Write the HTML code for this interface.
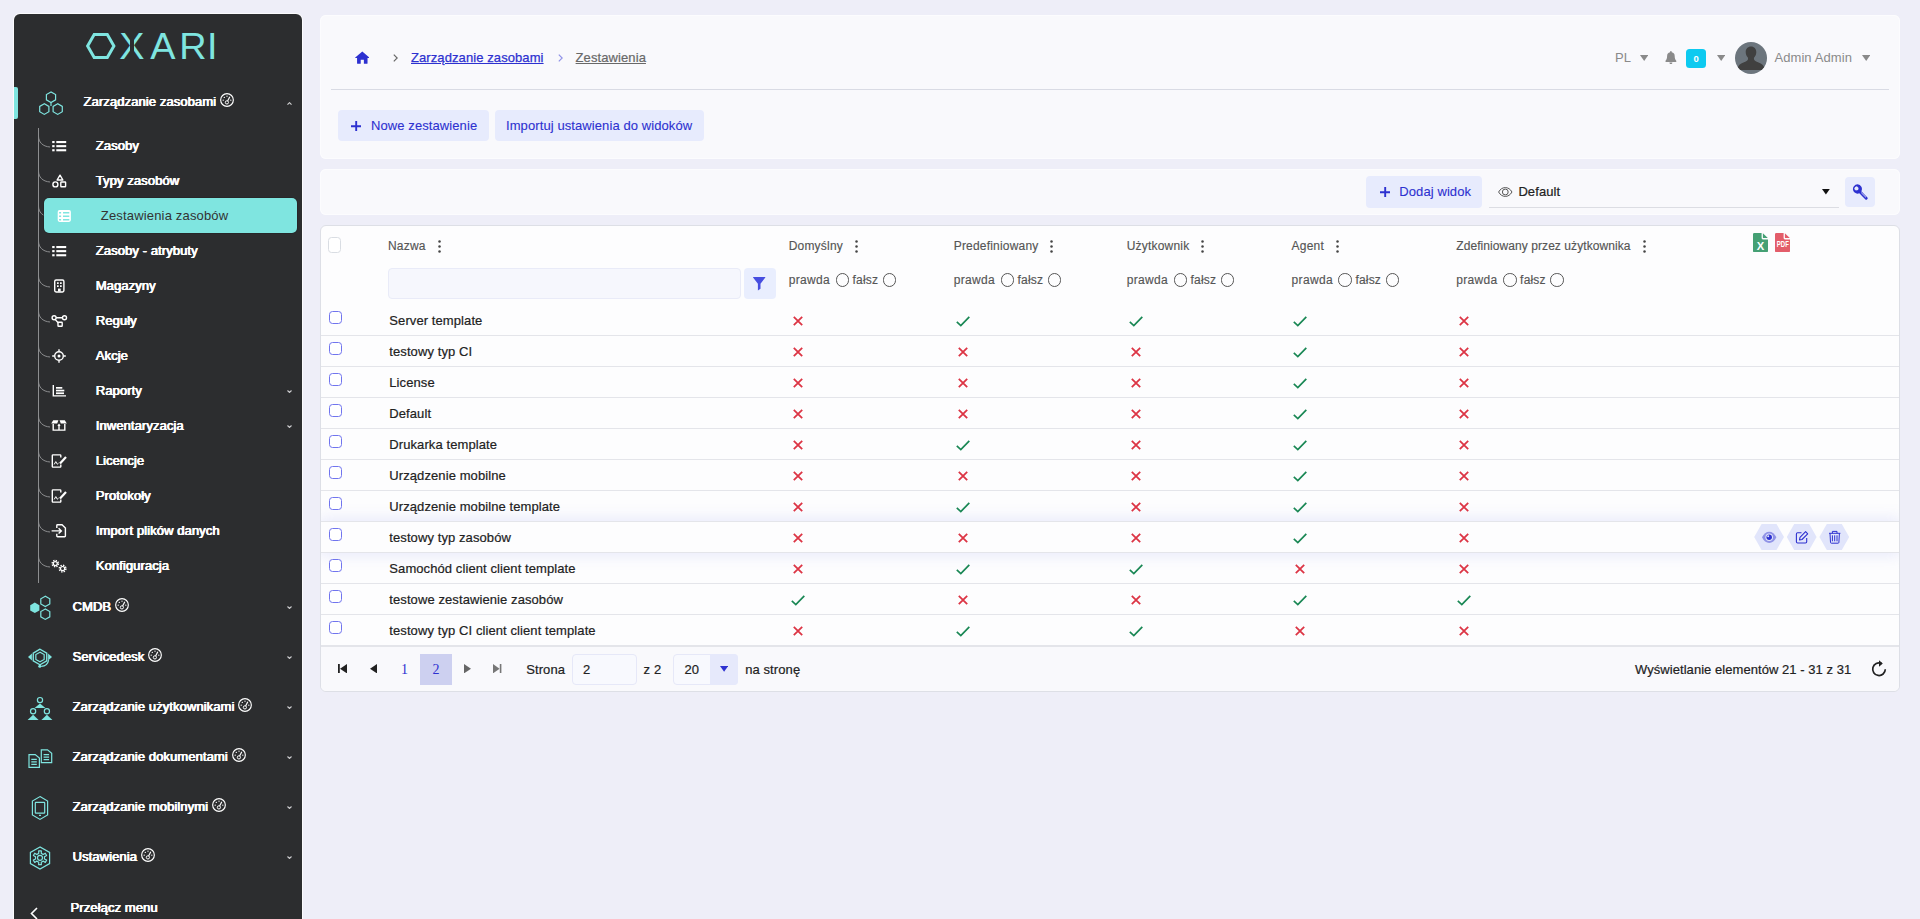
<!DOCTYPE html>
<html lang="pl">
<head>
<meta charset="utf-8">
<title>Zestawienia</title>
<style>
*{box-sizing:border-box;margin:0;padding:0}
html,body{width:1920px;height:919px;overflow:hidden}
body{background:#eeeef8;font-family:"Liberation Sans",sans-serif;font-size:13px;letter-spacing:0.09px;color:#222;-webkit-text-stroke:0.2px;position:relative}
.abs{position:absolute}
.t{position:absolute;white-space:nowrap;line-height:16px}
/* sidebar */
#sb{position:absolute;left:14px;top:14px;width:288px;height:920px;background:#2c2d2f;border-radius:6px 6px 0 0;box-shadow:0 0 0 1px #fbfbfd}
#sb .t{color:#fff;-webkit-text-stroke:0.12px #fff;text-shadow:0.4px 0 0 #fff,-0.4px 0 0 #fff}
#sb{--sbw:400}
.gz{display:inline-block;vertical-align:-1px;margin-left:0}
/* cards */
.card{position:absolute;left:320px;width:1580px;background:#f9f9fc;border-radius:6px;box-shadow:0 0 0 1px #fcfcfe inset}
.btn{position:absolute;background:#e7ebfd;border-radius:4px;color:#2a2dcc}
</style>
</head>
<body>
<div id="sb">
<svg class="abs" style="left:0;top:0" width="288" height="905" viewBox="14 14 288 905" fill="none">
<text x="84 119.35 150.2 179.15 207.1" y="59" font-family="Liberation Sans, sans-serif" font-size="37.8" letter-spacing="0" fill="#7fe5e0" style="-webkit-text-stroke:0">OXARI</text>
<rect x="82" y="28" width="35" height="36" fill="#2c2d2f"/><rect x="130" y="30" width="4" height="32" fill="#2c2d2f"/>
<g stroke="#7fe5e0" stroke-width="3" fill="none"><polygon points="87.6,46 94.2,34.5 107.3,34.5 113.9,46 107.3,57.5 94.2,57.5"/></g>
<path d="M14 87h2a2 2 0 0 1 2 2v28a2 2 0 0 1-2 2h-2z" fill="#7fe5e0"/>
<g stroke="#7fe5e0" stroke-width="1.2"><polygon points="51.00,91.90 46.41,94.55 46.41,99.85 51.00,102.50 55.59,99.85 55.59,94.55"/><polygon points="44.30,103.80 39.71,106.45 39.71,111.75 44.30,114.40 48.89,111.75 48.89,106.45"/><polygon points="57.70,103.80 53.11,106.45 53.11,111.75 57.70,114.40 62.29,111.75 62.29,106.45"/><path d="M51 102.5v3.6"/></g>
<path d="M38.5 128V583" stroke="#8d8e90" stroke-width="1"/>
<path d="M38.5 136c0 6 4 10.5 11.5 11" stroke="#8d8e90" stroke-width="1"/>
<path d="M38.5 171c0 6 4 10.5 11.5 11" stroke="#8d8e90" stroke-width="1"/>
<path d="M38.5 206c0 6 4 10.5 11.5 11" stroke="#8d8e90" stroke-width="1"/>
<path d="M38.5 241c0 6 4 10.5 11.5 11" stroke="#8d8e90" stroke-width="1"/>
<path d="M38.5 276c0 6 4 10.5 11.5 11" stroke="#8d8e90" stroke-width="1"/>
<path d="M38.5 311c0 6 4 10.5 11.5 11" stroke="#8d8e90" stroke-width="1"/>
<path d="M38.5 346c0 6 4 10.5 11.5 11" stroke="#8d8e90" stroke-width="1"/>
<path d="M38.5 381c0 6 4 10.5 11.5 11" stroke="#8d8e90" stroke-width="1"/>
<path d="M38.5 416c0 6 4 10.5 11.5 11" stroke="#8d8e90" stroke-width="1"/>
<path d="M38.5 451c0 6 4 10.5 11.5 11" stroke="#8d8e90" stroke-width="1"/>
<path d="M38.5 486c0 6 4 10.5 11.5 11" stroke="#8d8e90" stroke-width="1"/>
<path d="M38.5 521c0 6 4 10.5 11.5 11" stroke="#8d8e90" stroke-width="1"/>
<path d="M38.5 556c0 6 4 10.5 11.5 11" stroke="#8d8e90" stroke-width="1"/>
<rect x="43.4" y="197.4" width="254.2" height="36.2" rx="5.6" fill="#222325"/><rect x="44" y="198" width="253" height="35" rx="5" fill="#7fe5e0"/>
<g fill="#fff"><rect x="52.2" y="141.0" width="2.4" height="2.1"/><rect x="56.3" y="141.0" width="9.9" height="2.1"/><rect x="52.2" y="145.1" width="2.4" height="2.1"/><rect x="56.3" y="145.1" width="9.9" height="2.1"/><rect x="52.2" y="149.2" width="2.4" height="2.1"/><rect x="56.3" y="149.2" width="9.9" height="2.1"/></g>
<g stroke="#fff" fill="none" stroke-width="1.4"><path d="M60 175.2L62.9 180H57.1Z" stroke-linejoin="round"/><circle cx="55.4" cy="184.4" r="2.5"/><rect x="60.8" y="182" width="4.8" height="4.8" rx=".5"/></g>
<rect x="57.7" y="210.1" width="13.2" height="11.8" rx="1.8" fill="#fff"/><g fill="#7fe5e0"><rect x="59.1" y="212.0" width="2" height="1.5"/><rect x="63" y="212.0" width="6.3" height="1.5"/><rect x="59.1" y="215.5" width="2" height="1.5"/><rect x="63" y="215.5" width="6.3" height="1.5"/><rect x="59.1" y="219.0" width="2" height="1.5"/><rect x="63" y="219.0" width="6.3" height="1.5"/></g>
<g fill="#fff"><rect x="52.2" y="246.0" width="2.4" height="2.1"/><rect x="56.3" y="246.0" width="9.9" height="2.1"/><rect x="52.2" y="250.1" width="2.4" height="2.1"/><rect x="56.3" y="250.1" width="9.9" height="2.1"/><rect x="52.2" y="254.2" width="2.4" height="2.1"/><rect x="56.3" y="254.2" width="9.9" height="2.1"/></g>
<g stroke="#fff" fill="none" stroke-width="1.4"><rect x="54.7" y="280" width="9.2" height="12" rx="1.4"/></g><g fill="#fff"><rect x="57" y="282.3" width="1.7" height="1.7"/><rect x="60" y="282.3" width="1.7" height="1.7"/><rect x="57" y="285.3" width="1.7" height="1.7"/><rect x="60" y="285.3" width="1.7" height="1.7"/><rect x="58" y="288.6" width="2.7" height="3"/></g>
<g stroke="#fff" fill="none" stroke-width="1.4"><circle cx="54.1" cy="317.8" r="2"/><circle cx="64.5" cy="317.8" r="2"/><rect x="58" y="322.3" width="4.2" height="4" rx=".5"/><path d="M56.1 317.8H62.5M55.3 319.6L58.4 323"/></g>
<g stroke="#fff" fill="none" stroke-width="1.4"><circle cx="59" cy="356" r="4.3"/><path d="M59 349.2v2.3M59 360.5v2.3M52.2 356h2.3M63.5 356h2.3"/></g><circle cx="59" cy="356" r="1.5" fill="#fff"/>
<g stroke="#fff" fill="none" stroke-width="1.4"><path d="M53.3 385V395.9H66"/></g><g fill="#fff"><rect x="56" y="387" width="6.3" height="1.7"/><rect x="56" y="389.7" width="8.3" height="1.7"/><rect x="56" y="392.4" width="8" height="1.7"/></g>
<g fill="#fff"><path d="M53.2 420.3H58.4L57.2 423.4H51.2ZM59.6 420.3H64.8L66.8 423.4H60.8Z"/></g><g stroke="#fff" fill="none" stroke-width="1.4"><path d="M53.2 424V430.1H64.8V424M59 424.5V430"/></g><path d="M59 423.4L60.6 426H57.4Z" fill="#fff"/>
<g stroke="#fff" fill="none" stroke-width="1.4"><path d="M60.8 457.6V455.6a.7 .7 0 0 0 -.7 -.7H53a.7 .7 0 0 0 -.7 .7V466.4a.7 .7 0 0 0 .7 .7H60.1a.7 .7 0 0 0 .7 -.7V464.4"/><path d="M66 457.0L60 463.4" stroke-width="2.2"/><path d="M54.2 464.4l1.6 -2.8l1.5 2.6l1.2 -1" stroke-width="1"/></g>
<g stroke="#fff" fill="none" stroke-width="1.4"><path d="M60.8 492.6V490.6a.7 .7 0 0 0 -.7 -.7H53a.7 .7 0 0 0 -.7 .7V501.4a.7 .7 0 0 0 .7 .7H60.1a.7 .7 0 0 0 .7 -.7V499.4"/><path d="M66 492.0L60 498.4" stroke-width="2.2"/><path d="M54.2 499.4l1.6 -2.8l1.5 2.6l1.2 -1" stroke-width="1"/></g>
<g stroke="#fff" fill="none" stroke-width="1.4"><path d="M56.8 528V525.4a.7 .7 0 0 1 .7 -.7H62L65.4 528V536a.7 .7 0 0 1 -.7 .7H57.5a.7 .7 0 0 1 -.7 -.7V533.8"/><path d="M51.6 530.9H61.2M58.6 528.2L61.4 530.9L58.6 533.6"/></g>
<g stroke="#fff" fill="none"><circle cx="55.3" cy="563.6" r="3.1" stroke-width="1.5" stroke-dasharray="1.3 1.13"/><circle cx="55.3" cy="563.6" r="2" stroke-width="1.2"/><circle cx="62.6" cy="568.6" r="3.3" stroke-width="1.5" stroke-dasharray="1.4 1.19"/><circle cx="62.6" cy="568.6" r="2.1" stroke-width="1.2"/></g>
<polygon points="34.80,602.50 30.21,605.15 30.21,610.45 34.80,613.10 39.39,610.45 39.39,605.15" fill="#7fe5e0"/><g stroke="#7fe5e0" fill="none" stroke-width="1.2"><polygon points="45.30,596.20 40.80,598.80 40.80,604.00 45.30,606.60 49.80,604.00 49.80,598.80"/><polygon points="45.30,609.00 40.80,611.60 40.80,616.80 45.30,619.40 49.80,616.80 49.80,611.60"/></g>
<g stroke="#7fe5e0" fill="none" stroke-width="1.2"><polygon points="40.00,649.20 33.25,653.10 33.25,660.90 40.00,664.80 46.75,660.90 46.75,653.10" stroke-width="1.4"/><polygon points="40.00,652.20 35.84,654.60 35.84,659.40 40.00,661.80 44.16,659.40 44.16,654.60"/><path d="M48.6 660.2Q47.6 666.2 41.2 666.3"/></g><g fill="#7fe5e0"><path d="M28 657L31.9 653.6V660.4Z"/><path d="M52 657L48.1 653.6V660.4Z"/><circle cx="39.8" cy="666.2" r="1.5"/></g>
<g stroke="#7fe5e0" fill="none" stroke-width="1.2"><circle cx="40" cy="700.1" r="2.6"/><circle cx="33.1" cy="711.2" r="2.6"/><circle cx="46.9" cy="711.2" r="2.6"/></g><g fill="#7fe5e0"><path d="M40 703.6L45.4 708H34.600Z"/><path d="M33.1 714.800L38.6 720H27.600Z"/><path d="M46.9 714.800L52.4 720H41.400Z"/></g>
<g stroke="#7fe5e0" fill="none" stroke-width="1.2"><path d="M29 754.6H35.2L39.4 758V767.4H29Z"/><path d="M31.3 759.4H36.8M31.3 761.9H36.8M31.3 764.4H36.8"/><path d="M41.3 749.8H47.5L51.7 753.2V762.6H41.3Z"/><path d="M43.6 754.6H49.1M43.6 757.1H49.1M43.6 759.6H49.1"/></g>
<g stroke="#7fe5e0" fill="none" stroke-width="1.2"><path d="M40 796.6L47.6 801V815L40 819.4L32.4 815V801Z"/><rect x="35.3" y="802.4" width="9.4" height="10.8" rx=".6"/><path d="M39 815.3H41"/></g>
<g stroke="#7fe5e0" fill="none" stroke-width="1.2"><polygon points="40.00,846.90 30.39,852.45 30.39,863.55 40.00,869.10 49.61,863.55 49.61,852.45"/><polygon points="38.73,853.38 38.66,850.93 41.34,850.93 41.27,853.38 43.20,854.49 45.28,853.21 46.62,855.52 44.46,856.69 44.46,858.91 46.62,860.08 45.28,862.39 43.20,861.11 41.27,862.22 41.34,864.67 38.66,864.67 38.73,862.22 36.80,861.11 34.72,862.39 33.38,860.08 35.54,858.91 35.54,856.69 33.38,855.52 34.72,853.21 36.80,854.49" stroke-linejoin="round"/><circle cx="40" cy="857.8" r="2.5"/></g>
</svg>
<div class="t" style="left:69.6px;top:79px;font-weight:var(--sbw)">Zarządzanie zasobami <svg class="gz" width="14" height="14" viewBox="0 0 14 14" fill="none" stroke="#fff"><circle cx="7" cy="7" r="6.35" stroke-width="1.15"/><circle cx="6.9" cy="9.4" r="1.6" stroke-width="1"/><path d="M7.6 8L9.8 3.8" stroke-width="1.2"/><path d="M3.2 7.2h.01M4.3 4.4h.01M7 3.2h.01M10.8 7.2h.01" stroke-width="1.3" stroke-linecap="round"/></svg></div>
<div class="t" style="left:81.8px;top:124px;">Zasoby</div>
<div class="t" style="left:81.8px;top:159px;">Typy zasobów</div>
<div class="t" style="left:86.8px;top:194px;color:#333;-webkit-text-stroke:0;text-shadow:none;letter-spacing:0.17px">Zestawienia zasobów</div>
<div class="t" style="left:81.8px;top:229px;">Zasoby - atrybuty</div>
<div class="t" style="left:81.8px;top:264px;">Magazyny</div>
<div class="t" style="left:81.8px;top:299px;">Reguły</div>
<div class="t" style="left:81.8px;top:334px;">Akcje</div>
<div class="t" style="left:81.8px;top:369px;">Raporty</div>
<div class="t" style="left:81.8px;top:404px;">Inwentaryzacja</div>
<div class="t" style="left:81.8px;top:439px;">Licencje</div>
<div class="t" style="left:81.8px;top:474px;">Protokoły</div>
<div class="t" style="left:81.8px;top:509px;">Import plików danych</div>
<div class="t" style="left:81.8px;top:544px;">Konfiguracja</div>
<div class="t" style="left:58.6px;top:584px;">CMDB <svg class="gz" width="14" height="14" viewBox="0 0 14 14" fill="none" stroke="#fff"><circle cx="7" cy="7" r="6.35" stroke-width="1.15"/><circle cx="6.9" cy="9.4" r="1.6" stroke-width="1"/><path d="M7.6 8L9.8 3.8" stroke-width="1.2"/><path d="M3.2 7.2h.01M4.3 4.4h.01M7 3.2h.01M10.8 7.2h.01" stroke-width="1.3" stroke-linecap="round"/></svg></div>
<div class="t" style="left:58.6px;top:634px;">Servicedesk <svg class="gz" width="14" height="14" viewBox="0 0 14 14" fill="none" stroke="#fff"><circle cx="7" cy="7" r="6.35" stroke-width="1.15"/><circle cx="6.9" cy="9.4" r="1.6" stroke-width="1"/><path d="M7.6 8L9.8 3.8" stroke-width="1.2"/><path d="M3.2 7.2h.01M4.3 4.4h.01M7 3.2h.01M10.8 7.2h.01" stroke-width="1.3" stroke-linecap="round"/></svg></div>
<div class="t" style="left:58.6px;top:684px;">Zarządzanie użytkownikami <svg class="gz" width="14" height="14" viewBox="0 0 14 14" fill="none" stroke="#fff"><circle cx="7" cy="7" r="6.35" stroke-width="1.15"/><circle cx="6.9" cy="9.4" r="1.6" stroke-width="1"/><path d="M7.6 8L9.8 3.8" stroke-width="1.2"/><path d="M3.2 7.2h.01M4.3 4.4h.01M7 3.2h.01M10.8 7.2h.01" stroke-width="1.3" stroke-linecap="round"/></svg></div>
<div class="t" style="left:58.6px;top:734px;">Zarządzanie dokumentami <svg class="gz" width="14" height="14" viewBox="0 0 14 14" fill="none" stroke="#fff"><circle cx="7" cy="7" r="6.35" stroke-width="1.15"/><circle cx="6.9" cy="9.4" r="1.6" stroke-width="1"/><path d="M7.6 8L9.8 3.8" stroke-width="1.2"/><path d="M3.2 7.2h.01M4.3 4.4h.01M7 3.2h.01M10.8 7.2h.01" stroke-width="1.3" stroke-linecap="round"/></svg></div>
<div class="t" style="left:58.6px;top:784px;">Zarządzanie mobilnymi <svg class="gz" width="14" height="14" viewBox="0 0 14 14" fill="none" stroke="#fff"><circle cx="7" cy="7" r="6.35" stroke-width="1.15"/><circle cx="6.9" cy="9.4" r="1.6" stroke-width="1"/><path d="M7.6 8L9.8 3.8" stroke-width="1.2"/><path d="M3.2 7.2h.01M4.3 4.4h.01M7 3.2h.01M10.8 7.2h.01" stroke-width="1.3" stroke-linecap="round"/></svg></div>
<div class="t" style="left:58.6px;top:834px;">Ustawienia <svg class="gz" width="14" height="14" viewBox="0 0 14 14" fill="none" stroke="#fff"><circle cx="7" cy="7" r="6.35" stroke-width="1.15"/><circle cx="6.9" cy="9.4" r="1.6" stroke-width="1"/><path d="M7.6 8L9.8 3.8" stroke-width="1.2"/><path d="M3.2 7.2h.01M4.3 4.4h.01M7 3.2h.01M10.8 7.2h.01" stroke-width="1.3" stroke-linecap="round"/></svg></div>
<div class="t" style="left:56.6px;top:885.7px;">Przełącz menu</div>
<svg class="abs" style="left:272.7px;top:88.0px" width="5" height="3" viewBox="0 0 4.6 3" fill="none" stroke="#d0d0d2" stroke-width="1.15"><path d="M.3 2.6L2.3 0.7L4.3 2.6"/></svg>
<svg class="abs" style="left:272.7px;top:375.5px" width="5" height="3" viewBox="0 0 4.6 3" fill="none" stroke="#d0d0d2" stroke-width="1.15"><path d="M.3 0.5L2.3 2.4L4.3 0.5"/></svg>
<svg class="abs" style="left:272.7px;top:410.5px" width="5" height="3" viewBox="0 0 4.6 3" fill="none" stroke="#d0d0d2" stroke-width="1.15"><path d="M.3 0.5L2.3 2.4L4.3 0.5"/></svg>
<svg class="abs" style="left:272.7px;top:592.0px" width="5" height="3" viewBox="0 0 4.6 3" fill="none" stroke="#d0d0d2" stroke-width="1.15"><path d="M.3 0.5L2.3 2.4L4.3 0.5"/></svg>
<svg class="abs" style="left:272.7px;top:642.0px" width="5" height="3" viewBox="0 0 4.6 3" fill="none" stroke="#d0d0d2" stroke-width="1.15"><path d="M.3 0.5L2.3 2.4L4.3 0.5"/></svg>
<svg class="abs" style="left:272.7px;top:692.0px" width="5" height="3" viewBox="0 0 4.6 3" fill="none" stroke="#d0d0d2" stroke-width="1.15"><path d="M.3 0.5L2.3 2.4L4.3 0.5"/></svg>
<svg class="abs" style="left:272.7px;top:742.0px" width="5" height="3" viewBox="0 0 4.6 3" fill="none" stroke="#d0d0d2" stroke-width="1.15"><path d="M.3 0.5L2.3 2.4L4.3 0.5"/></svg>
<svg class="abs" style="left:272.7px;top:792.0px" width="5" height="3" viewBox="0 0 4.6 3" fill="none" stroke="#d0d0d2" stroke-width="1.15"><path d="M.3 0.5L2.3 2.4L4.3 0.5"/></svg>
<svg class="abs" style="left:272.7px;top:842.0px" width="5" height="3" viewBox="0 0 4.6 3" fill="none" stroke="#d0d0d2" stroke-width="1.15"><path d="M.3 0.5L2.3 2.4L4.3 0.5"/></svg>
<svg class="abs" style="left:16px;top:893px" width="8" height="12" viewBox="0 0 8 12" fill="none" stroke="#fff" stroke-width="1.6"><path d="M7 1L1.5 6.5L7 12"/></svg>
</div>
<div class="card" id="c1" style="top:15px;height:144px">
<svg class="abs" style="left:34.60000000000002px;top:36px" width="14.6" height="12.8" viewBox="0 0 24 21" fill="#2d31d0"><path d="M12 0.6L0.4 10.6a.5 .5 0 0 0 .3 .9H3.4V20a1 1 0 0 0 1 1H9.4V14.4H14.6V21H19.6a1 1 0 0 0 1-1V11.5H23.3a.5 .5 0 0 0 .3-.9Z"/></svg>
<svg class="abs" style="left:72.60000000000002px;top:39px" width="5" height="8" viewBox="0 0 5 8" fill="none" stroke="#666" stroke-width="1.2"><path d="M.8 .6L4.2 4L.8 7.4"/></svg>
<div class="t" style="left:91px;top:34.5px;color:#2d31d0;text-decoration:underline;-webkit-text-stroke:0.25px #2d31d0">Zarządzanie zasobami</div>
<svg class="abs" style="left:238px;top:39px" width="5" height="8" viewBox="0 0 5 8" fill="none" stroke="#8f92e8" stroke-width="1.2"><path d="M.8 .6L4.2 4L.8 7.4"/></svg>
<div class="t" style="left:255.60000000000002px;top:34.5px;color:#686868;text-decoration:underline">Zestawienia</div>
<div class="t" style="left:1295px;top:34.5px;color:#8a8a8a;-webkit-text-stroke:0">PL</div>
<svg class="abs" style="left:1319.8px;top:40.3px" width="8.4" height="6" viewBox="0 0 8.4 6" fill="#8a8a8a"><path d="M0 0H8.4L4.2 6Z"/></svg>
<svg class="abs" style="left:1345.2px;top:35.5px" width="11.8" height="13.2" viewBox="0 0 14 16" fill="#8a8a8a"><path d="M7 0a1 1 0 0 0-1 1v.6A4.6 4.6 0 0 0 2.4 6.100c0 3.500-.9 4.700-1.900 5.700a.9 .9 0 0 0 .65 1.500H12.850a.9 .9 0 0 0 .65-1.500c-1-1-1.900-2.200-1.900-5.700A4.600 4.600 0 0 0 8 1.600V1a1 1 0 0 0-1-1ZM5.200 14.100a1.800 1.800 0 0 0 3.600 0Z"/></svg>
<div class="abs" style="left:1366.2px;top:34px;width:19.8px;height:19px;background:#0dcaf0;border-radius:3.5px"></div>
<div class="t" style="left:1366.2px;top:35.6px;width:19.8px;text-align:center;color:#fff;font-weight:bold;font-size:9.5px;letter-spacing:0;-webkit-text-stroke:0">0</div>
<svg class="abs" style="left:1396.8px;top:40.3px" width="8.4" height="6" viewBox="0 0 8.4 6" fill="#8a8a8a"><path d="M0 0H8.4L4.2 6Z"/></svg>
<svg class="abs" style="left:1415px;top:27px" width="32" height="32" viewBox="0 0 32 32"><defs><clipPath id="av"><circle cx="16" cy="16" r="16"/></clipPath></defs><circle cx="16" cy="16" r="16" fill="#6c757d"/><g clip-path="url(#av)" fill="#404040"><path d="M16 4.500c-3.200 0-5.300 2.300-5.300 5.600 0 2.200 .9 4.400 2.300 5.700 .3 1.700-.4 2.900-2.200 3.600C7.600 20.600 4.400 21.800 3.200 24.500L2.500 28H29.500L28.800 24.500C27.600 21.800 24.400 20.600 21.200 19.400 19.400 18.700 18.700 17.500 19 15.800 20.400 14.500 21.300 12.300 21.300 10.100 21.300 6.800 19.200 4.500 16 4.500Z"/></g></svg>
<div class="t" style="left:1454.4px;top:34.5px;color:#8a8a8a;-webkit-text-stroke:0">Admin Admin</div>
<svg class="abs" style="left:1542px;top:40.3px" width="8.4" height="6" viewBox="0 0 8.4 6" fill="#8a8a8a"><path d="M0 0H8.4L4.2 6Z"/></svg>
<div class="abs" style="left:11px;top:74px;width:1558px;height:1px;background:#d9dbe4"></div>
<div class="btn" style="left:18px;top:95px;width:151px;height:31px"></div>
<svg class="abs" style="left:30.80000000000001px;top:106.0px" width="10.4" height="10.4" viewBox="0 0 10.4 10.4" stroke="#2d31d0" stroke-width="1.9"><path d="M5.200 0V10.400M0 5.200H10.400"/></svg>
<div class="t" style="left:51px;top:102.8px;color:#2d31d0;-webkit-text-stroke:0.1px #2d31d0">Nowe zestawienie</div>
<div class="btn" style="left:175px;top:95px;width:209px;height:31px"></div>
<div class="t" style="left:186px;top:102.8px;color:#2d31d0;-webkit-text-stroke:0.1px #2d31d0">Importuj ustawienia do widoków</div>
</div>
<div class="card" id="c2" style="top:169px;height:46px">
<div class="btn" style="left:1046px;top:7px;width:116px;height:32px"></div>
<svg class="abs" style="left:1059.7px;top:17.600000000000012px" width="10.4" height="10.4" viewBox="0 0 10.4 10.4" stroke="#2d31d0" stroke-width="1.9"><path d="M5.200 0V10.400M0 5.200H10.400"/></svg>
<div class="t" style="left:1079.3px;top:14.800000000000011px;color:#2d31d0;-webkit-text-stroke:0.1px #2d31d0">Dodaj widok</div>
<svg class="abs" style="left:1178.2px;top:18px" width="14.6" height="10" viewBox="0 0 14.6 10" fill="none" stroke="#555" stroke-width="1"><path d="M.6 5C2.300 2 4.600 .6 7.300 .6S12.300 2 14 5C12.300 8 10 9.400 7.300 9.400S2.300 8 .6 5Z"/><circle cx="7.300" cy="5" r="2.900"/></svg>
<div class="t" style="left:1198.4px;top:14.800000000000011px;color:#222">Default</div>
<svg class="abs" style="left:1502.2px;top:20px" width="7.8" height="5.6" viewBox="0 0 7.8 5.6" fill="#111"><path d="M0 0H7.8L3.9 5.6Z"/></svg>
<div class="abs" style="left:1169px;top:38px;width:350px;height:1px;background:#dcdde3"></div>
<div class="btn" style="left:1525px;top:8px;width:29.5px;height:30px"></div>
<svg class="abs" style="left:1532px;top:15px" width="16" height="16" viewBox="0 0 16 16" fill="#2d31d0"><path d="M5.600 0.300A4.700 4.700 0 0 0 1.100 6.200 4.700 4.700 0 0 0 7.300 9.300L13.200 15.200a1.400 1.400 0 0 0 2-2L9.300 7.300A4.700 4.700 0 0 0 5.600 0.300ZM4.900 2.200 6.600 3.900 6.100 6.100 3.900 6.600 2.200 4.900A3.200 3.200 0 0 1 4.900 2.200Z" fill-rule="evenodd"/><path d="M9.200 8.600L14 13.400" stroke="#e6e9fb" stroke-width=".9"/></svg>
</div>
<div id="grid" class="abs" style="left:320px;top:225px;width:1580px;height:467px;background:#fdfdfe;border:1px solid #dddfe6;border-radius:6px;overflow:hidden">
<div class="abs" style="left:0.0px;top:296.0px;width:1578px;height:30px;box-shadow:0 0 16px 3px rgba(120,130,230,0.17);background:#fdfdfe"></div>
<div class="abs" style="left:0.0px;top:109.0px;width:1578px;height:1px;background:#e4e5ea"></div>
<div class="abs" style="left:0.0px;top:140.0px;width:1578px;height:1px;background:#e4e5ea"></div>
<div class="abs" style="left:0.0px;top:171.0px;width:1578px;height:1px;background:#e4e5ea"></div>
<div class="abs" style="left:0.0px;top:202.0px;width:1578px;height:1px;background:#e4e5ea"></div>
<div class="abs" style="left:0.0px;top:233.0px;width:1578px;height:1px;background:#e4e5ea"></div>
<div class="abs" style="left:0.0px;top:264.0px;width:1578px;height:1px;background:#e4e5ea"></div>
<div class="abs" style="left:0.0px;top:295.0px;width:1578px;height:1px;background:#e4e5ea"></div>
<div class="abs" style="left:0.0px;top:326.0px;width:1578px;height:1px;background:#e4e5ea"></div>
<div class="abs" style="left:0.0px;top:357.0px;width:1578px;height:1px;background:#e4e5ea"></div>
<div class="abs" style="left:0.0px;top:388.0px;width:1578px;height:1px;background:#e4e5ea"></div>
<div class="abs" style="left:0.0px;top:419.0px;width:1578px;height:1px;background:#e4e5ea"></div>
<div class="abs" style="left:7.0px;top:11.0px;width:13px;height:16px;border:1px solid #d9dde3;border-radius:3.5px;background:#fff"></div>
<div class="t" style="left:67.0px;top:11.8px;color:#555;font-size:12px;letter-spacing:0.2px;-webkit-text-stroke:0.15px #555">Nazwa</div>
<svg class="abs" style="left:117.0px;top:13.5px" width="3" height="13" viewBox="0 0 3 13" fill="#444"><circle cx="1.5" cy="1.4" r="1.25"/><circle cx="1.5" cy="6.5" r="1.25"/><circle cx="1.5" cy="11.6" r="1.25"/></svg>
<div class="t" style="left:467.7px;top:11.8px;color:#555;font-size:12px;letter-spacing:0.2px;-webkit-text-stroke:0.15px #555">Domyślny</div>
<svg class="abs" style="left:533.8px;top:13.5px" width="3" height="13" viewBox="0 0 3 13" fill="#444"><circle cx="1.5" cy="1.4" r="1.25"/><circle cx="1.5" cy="6.5" r="1.25"/><circle cx="1.5" cy="11.6" r="1.25"/></svg>
<div class="t" style="left:632.7px;top:11.8px;color:#555;font-size:12px;letter-spacing:0.2px;-webkit-text-stroke:0.15px #555">Predefiniowany</div>
<svg class="abs" style="left:728.8px;top:13.5px" width="3" height="13" viewBox="0 0 3 13" fill="#444"><circle cx="1.5" cy="1.4" r="1.25"/><circle cx="1.5" cy="6.5" r="1.25"/><circle cx="1.5" cy="11.6" r="1.25"/></svg>
<div class="t" style="left:805.7px;top:11.8px;color:#555;font-size:12px;letter-spacing:0.2px;-webkit-text-stroke:0.15px #555">Użytkownik</div>
<svg class="abs" style="left:880.0px;top:13.5px" width="3" height="13" viewBox="0 0 3 13" fill="#444"><circle cx="1.5" cy="1.4" r="1.25"/><circle cx="1.5" cy="6.5" r="1.25"/><circle cx="1.5" cy="11.6" r="1.25"/></svg>
<div class="t" style="left:970.6px;top:11.8px;color:#555;font-size:12px;letter-spacing:0.2px;-webkit-text-stroke:0.15px #555">Agent</div>
<svg class="abs" style="left:1015.0px;top:13.5px" width="3" height="13" viewBox="0 0 3 13" fill="#444"><circle cx="1.5" cy="1.4" r="1.25"/><circle cx="1.5" cy="6.5" r="1.25"/><circle cx="1.5" cy="11.6" r="1.25"/></svg>
<div class="t" style="left:1135.3px;top:11.8px;color:#555;font-size:12px;letter-spacing:0.2px;-webkit-text-stroke:0.15px #555;letter-spacing:0.07px">Zdefiniowany przez użytkownika</div>
<svg class="abs" style="left:1321.9px;top:13.5px" width="3" height="13" viewBox="0 0 3 13" fill="#444"><circle cx="1.5" cy="1.4" r="1.25"/><circle cx="1.5" cy="6.5" r="1.25"/><circle cx="1.5" cy="11.6" r="1.25"/></svg>
<div class="abs" style="left:67.0px;top:42.0px;width:353px;height:30.6px;background:#f6f7fd;border:1px solid #e9ebf8;border-radius:4px"></div>
<div class="abs" style="left:423.3px;top:42.0px;width:31.5px;height:30.6px;background:#e9eefe;border-radius:4px"></div>
<svg class="abs" style="left:432.2px;top:51px" width="12.4" height="13.6" viewBox="0 0 12.4 13" preserveAspectRatio="none" fill="#474ee0"><path d="M.3 0H12.100a.3 .3 0 0 1 .23 .5L7.500 6.400V11.300L4.900 13V6.400L.07 .5A.3 .3 0 0 1 .3 0Z"/></svg>
<div class="t" style="left:467.7px;top:45.8px;color:#555;font-size:12px;letter-spacing:0.2px;-webkit-text-stroke:0.15px #555;letter-spacing:0.32px">prawda</div>
<div class="abs" style="left:514.5px;top:47.2px;width:13.5px;height:13.5px;border:1px solid #555;border-radius:50%"></div>
<div class="t" style="left:531.5px;top:45.8px;color:#555;font-size:12px;letter-spacing:0.2px;-webkit-text-stroke:0.15px #555">fałsz</div>
<div class="abs" style="left:561.7px;top:47.2px;width:13.5px;height:13.5px;border:1px solid #555;border-radius:50%"></div>
<div class="t" style="left:632.7px;top:45.8px;color:#555;font-size:12px;letter-spacing:0.2px;-webkit-text-stroke:0.15px #555;letter-spacing:0.32px">prawda</div>
<div class="abs" style="left:679.5px;top:47.2px;width:13.5px;height:13.5px;border:1px solid #555;border-radius:50%"></div>
<div class="t" style="left:696.5px;top:45.8px;color:#555;font-size:12px;letter-spacing:0.2px;-webkit-text-stroke:0.15px #555">fałsz</div>
<div class="abs" style="left:726.7px;top:47.2px;width:13.5px;height:13.5px;border:1px solid #555;border-radius:50%"></div>
<div class="t" style="left:805.7px;top:45.8px;color:#555;font-size:12px;letter-spacing:0.2px;-webkit-text-stroke:0.15px #555;letter-spacing:0.32px">prawda</div>
<div class="abs" style="left:852.5px;top:47.2px;width:13.5px;height:13.5px;border:1px solid #555;border-radius:50%"></div>
<div class="t" style="left:869.5px;top:45.8px;color:#555;font-size:12px;letter-spacing:0.2px;-webkit-text-stroke:0.15px #555">fałsz</div>
<div class="abs" style="left:899.7px;top:47.2px;width:13.5px;height:13.5px;border:1px solid #555;border-radius:50%"></div>
<div class="t" style="left:970.6px;top:45.8px;color:#555;font-size:12px;letter-spacing:0.2px;-webkit-text-stroke:0.15px #555;letter-spacing:0.32px">prawda</div>
<div class="abs" style="left:1017.4px;top:47.2px;width:13.5px;height:13.5px;border:1px solid #555;border-radius:50%"></div>
<div class="t" style="left:1034.4px;top:45.8px;color:#555;font-size:12px;letter-spacing:0.2px;-webkit-text-stroke:0.15px #555">fałsz</div>
<div class="abs" style="left:1064.6px;top:47.2px;width:13.5px;height:13.5px;border:1px solid #555;border-radius:50%"></div>
<div class="t" style="left:1135.3px;top:45.8px;color:#555;font-size:12px;letter-spacing:0.2px;-webkit-text-stroke:0.15px #555;letter-spacing:0.32px">prawda</div>
<div class="abs" style="left:1182.1px;top:47.2px;width:13.5px;height:13.5px;border:1px solid #555;border-radius:50%"></div>
<div class="t" style="left:1199.1px;top:45.8px;color:#555;font-size:12px;letter-spacing:0.2px;-webkit-text-stroke:0.15px #555">fałsz</div>
<div class="abs" style="left:1229.3px;top:47.2px;width:13.5px;height:13.5px;border:1px solid #555;border-radius:50%"></div>
<svg class="abs" style="left:1432.0px;top:7.1px" width="15" height="19.3" viewBox="0 0 15 19.3"><path d="M1.300 0H8.600V5a1.400 1.400 0 0 0 1.400 1.400H15V18a1.300 1.300 0 0 1-1.300 1.300H1.300A1.300 1.300 0 0 1 0 18V1.300A1.300 1.300 0 0 1 1.300 0Z" fill="#45a074"/><path d="M9.900 0.200L14.800 5.100H10.600a.7 .7 0 0 1-.7-.7Z" fill="#45a074"/><text x="7.400" y="16.800" text-anchor="middle" font-size="11.200" font-family="Liberation Sans, sans-serif" font-weight="bold" fill="#fff" style="-webkit-text-stroke:0.6px #fff;letter-spacing:0">X</text></svg>
<svg class="abs" style="left:1454.0px;top:7.1px" width="15" height="19.3" viewBox="0 0 15 19.3"><path d="M1.300 0H8.600V5a1.400 1.400 0 0 0 1.400 1.400H15V18a1.300 1.300 0 0 1-1.300 1.300H1.300A1.300 1.300 0 0 1 0 18V1.300A1.300 1.300 0 0 1 1.300 0Z" fill="#e35d6a"/><path d="M9.900 0.200L14.800 5.100H10.600a.7 .7 0 0 1-.7-.7Z" fill="#e35d6a"/><text x="1.800" y="13.900" font-size="8.300" textLength="12" lengthAdjust="spacingAndGlyphs" font-family="Liberation Sans, sans-serif" font-weight="bold" fill="#fff" style="-webkit-text-stroke:0;letter-spacing:0">PDF</text></svg>
<div class="abs" style="left:8.2px;top:85.0px;width:13px;height:13px;border:1.4px solid #7074ee;border-radius:3.5px;background:#fff"></div>
<div class="t" style="left:68.3px;top:86.5px;color:#222">Server template</div>
<svg class="abs" style="left:472.1px;top:90.3px" width="10" height="10" viewBox="0 0 10 10" fill="none" stroke="#dc3545" stroke-width="1.8"><path d="M.8 .8L9.200 9.200M9.200 .8L.8 9.200"/></svg>
<svg class="abs" style="left:635.1px;top:89.7px" width="14" height="11" viewBox="0 0 14 11" fill="none" stroke="#198754" stroke-width="1.7"><path d="M.8 5.900L4.800 9.600L13.300 .8"/></svg>
<svg class="abs" style="left:807.8px;top:89.7px" width="14" height="11" viewBox="0 0 14 11" fill="none" stroke="#198754" stroke-width="1.7"><path d="M.8 5.900L4.800 9.600L13.300 .8"/></svg>
<svg class="abs" style="left:972.2px;top:89.7px" width="14" height="11" viewBox="0 0 14 11" fill="none" stroke="#198754" stroke-width="1.7"><path d="M.8 5.900L4.800 9.600L13.300 .8"/></svg>
<svg class="abs" style="left:1138.4px;top:90.3px" width="10" height="10" viewBox="0 0 10 10" fill="none" stroke="#dc3545" stroke-width="1.8"><path d="M.8 .8L9.200 9.200M9.200 .8L.8 9.200"/></svg>
<div class="abs" style="left:8.2px;top:116.0px;width:13px;height:13px;border:1.4px solid #7074ee;border-radius:3.5px;background:#fff"></div>
<div class="t" style="left:68.3px;top:117.5px;color:#222">testowy typ CI</div>
<svg class="abs" style="left:472.1px;top:121.3px" width="10" height="10" viewBox="0 0 10 10" fill="none" stroke="#dc3545" stroke-width="1.8"><path d="M.8 .8L9.200 9.200M9.200 .8L.8 9.200"/></svg>
<svg class="abs" style="left:637.1px;top:121.3px" width="10" height="10" viewBox="0 0 10 10" fill="none" stroke="#dc3545" stroke-width="1.8"><path d="M.8 .8L9.200 9.200M9.200 .8L.8 9.200"/></svg>
<svg class="abs" style="left:809.8px;top:121.3px" width="10" height="10" viewBox="0 0 10 10" fill="none" stroke="#dc3545" stroke-width="1.8"><path d="M.8 .8L9.200 9.200M9.200 .8L.8 9.200"/></svg>
<svg class="abs" style="left:972.2px;top:120.7px" width="14" height="11" viewBox="0 0 14 11" fill="none" stroke="#198754" stroke-width="1.7"><path d="M.8 5.900L4.800 9.600L13.300 .8"/></svg>
<svg class="abs" style="left:1138.4px;top:121.3px" width="10" height="10" viewBox="0 0 10 10" fill="none" stroke="#dc3545" stroke-width="1.8"><path d="M.8 .8L9.200 9.200M9.200 .8L.8 9.200"/></svg>
<div class="abs" style="left:8.2px;top:147.0px;width:13px;height:13px;border:1.4px solid #7074ee;border-radius:3.5px;background:#fff"></div>
<div class="t" style="left:68.3px;top:148.5px;color:#222">License</div>
<svg class="abs" style="left:472.1px;top:152.3px" width="10" height="10" viewBox="0 0 10 10" fill="none" stroke="#dc3545" stroke-width="1.8"><path d="M.8 .8L9.200 9.200M9.200 .8L.8 9.200"/></svg>
<svg class="abs" style="left:637.1px;top:152.3px" width="10" height="10" viewBox="0 0 10 10" fill="none" stroke="#dc3545" stroke-width="1.8"><path d="M.8 .8L9.200 9.200M9.200 .8L.8 9.200"/></svg>
<svg class="abs" style="left:809.8px;top:152.3px" width="10" height="10" viewBox="0 0 10 10" fill="none" stroke="#dc3545" stroke-width="1.8"><path d="M.8 .8L9.200 9.200M9.200 .8L.8 9.200"/></svg>
<svg class="abs" style="left:972.2px;top:151.7px" width="14" height="11" viewBox="0 0 14 11" fill="none" stroke="#198754" stroke-width="1.7"><path d="M.8 5.900L4.800 9.600L13.300 .8"/></svg>
<svg class="abs" style="left:1138.4px;top:152.3px" width="10" height="10" viewBox="0 0 10 10" fill="none" stroke="#dc3545" stroke-width="1.8"><path d="M.8 .8L9.200 9.200M9.200 .8L.8 9.200"/></svg>
<div class="abs" style="left:8.2px;top:178.0px;width:13px;height:13px;border:1.4px solid #7074ee;border-radius:3.5px;background:#fff"></div>
<div class="t" style="left:68.3px;top:179.5px;color:#222">Default</div>
<svg class="abs" style="left:472.1px;top:183.3px" width="10" height="10" viewBox="0 0 10 10" fill="none" stroke="#dc3545" stroke-width="1.8"><path d="M.8 .8L9.200 9.200M9.200 .8L.8 9.200"/></svg>
<svg class="abs" style="left:637.1px;top:183.3px" width="10" height="10" viewBox="0 0 10 10" fill="none" stroke="#dc3545" stroke-width="1.8"><path d="M.8 .8L9.200 9.200M9.200 .8L.8 9.200"/></svg>
<svg class="abs" style="left:809.8px;top:183.3px" width="10" height="10" viewBox="0 0 10 10" fill="none" stroke="#dc3545" stroke-width="1.8"><path d="M.8 .8L9.200 9.200M9.200 .8L.8 9.200"/></svg>
<svg class="abs" style="left:972.2px;top:182.7px" width="14" height="11" viewBox="0 0 14 11" fill="none" stroke="#198754" stroke-width="1.7"><path d="M.8 5.900L4.800 9.600L13.300 .8"/></svg>
<svg class="abs" style="left:1138.4px;top:183.3px" width="10" height="10" viewBox="0 0 10 10" fill="none" stroke="#dc3545" stroke-width="1.8"><path d="M.8 .8L9.200 9.200M9.200 .8L.8 9.200"/></svg>
<div class="abs" style="left:8.2px;top:209.0px;width:13px;height:13px;border:1.4px solid #7074ee;border-radius:3.5px;background:#fff"></div>
<div class="t" style="left:68.3px;top:210.5px;color:#222">Drukarka template</div>
<svg class="abs" style="left:472.1px;top:214.3px" width="10" height="10" viewBox="0 0 10 10" fill="none" stroke="#dc3545" stroke-width="1.8"><path d="M.8 .8L9.200 9.200M9.200 .8L.8 9.200"/></svg>
<svg class="abs" style="left:635.1px;top:213.7px" width="14" height="11" viewBox="0 0 14 11" fill="none" stroke="#198754" stroke-width="1.7"><path d="M.8 5.900L4.800 9.600L13.300 .8"/></svg>
<svg class="abs" style="left:809.8px;top:214.3px" width="10" height="10" viewBox="0 0 10 10" fill="none" stroke="#dc3545" stroke-width="1.8"><path d="M.8 .8L9.200 9.200M9.200 .8L.8 9.200"/></svg>
<svg class="abs" style="left:972.2px;top:213.7px" width="14" height="11" viewBox="0 0 14 11" fill="none" stroke="#198754" stroke-width="1.7"><path d="M.8 5.900L4.800 9.600L13.300 .8"/></svg>
<svg class="abs" style="left:1138.4px;top:214.3px" width="10" height="10" viewBox="0 0 10 10" fill="none" stroke="#dc3545" stroke-width="1.8"><path d="M.8 .8L9.200 9.200M9.200 .8L.8 9.200"/></svg>
<div class="abs" style="left:8.2px;top:240.0px;width:13px;height:13px;border:1.4px solid #7074ee;border-radius:3.5px;background:#fff"></div>
<div class="t" style="left:68.3px;top:241.5px;color:#222">Urządzenie mobilne</div>
<svg class="abs" style="left:472.1px;top:245.3px" width="10" height="10" viewBox="0 0 10 10" fill="none" stroke="#dc3545" stroke-width="1.8"><path d="M.8 .8L9.200 9.200M9.200 .8L.8 9.200"/></svg>
<svg class="abs" style="left:637.1px;top:245.3px" width="10" height="10" viewBox="0 0 10 10" fill="none" stroke="#dc3545" stroke-width="1.8"><path d="M.8 .8L9.200 9.200M9.200 .8L.8 9.200"/></svg>
<svg class="abs" style="left:809.8px;top:245.3px" width="10" height="10" viewBox="0 0 10 10" fill="none" stroke="#dc3545" stroke-width="1.8"><path d="M.8 .8L9.200 9.200M9.200 .8L.8 9.200"/></svg>
<svg class="abs" style="left:972.2px;top:244.7px" width="14" height="11" viewBox="0 0 14 11" fill="none" stroke="#198754" stroke-width="1.7"><path d="M.8 5.900L4.800 9.600L13.300 .8"/></svg>
<svg class="abs" style="left:1138.4px;top:245.3px" width="10" height="10" viewBox="0 0 10 10" fill="none" stroke="#dc3545" stroke-width="1.8"><path d="M.8 .8L9.200 9.200M9.200 .8L.8 9.200"/></svg>
<div class="abs" style="left:8.2px;top:271.0px;width:13px;height:13px;border:1.4px solid #7074ee;border-radius:3.5px;background:#fff"></div>
<div class="t" style="left:68.3px;top:272.5px;color:#222">Urządzenie mobilne template</div>
<svg class="abs" style="left:472.1px;top:276.3px" width="10" height="10" viewBox="0 0 10 10" fill="none" stroke="#dc3545" stroke-width="1.8"><path d="M.8 .8L9.200 9.200M9.200 .8L.8 9.200"/></svg>
<svg class="abs" style="left:635.1px;top:275.7px" width="14" height="11" viewBox="0 0 14 11" fill="none" stroke="#198754" stroke-width="1.7"><path d="M.8 5.900L4.800 9.600L13.300 .8"/></svg>
<svg class="abs" style="left:809.8px;top:276.3px" width="10" height="10" viewBox="0 0 10 10" fill="none" stroke="#dc3545" stroke-width="1.8"><path d="M.8 .8L9.200 9.200M9.200 .8L.8 9.200"/></svg>
<svg class="abs" style="left:972.2px;top:275.7px" width="14" height="11" viewBox="0 0 14 11" fill="none" stroke="#198754" stroke-width="1.7"><path d="M.8 5.900L4.800 9.600L13.300 .8"/></svg>
<svg class="abs" style="left:1138.4px;top:276.3px" width="10" height="10" viewBox="0 0 10 10" fill="none" stroke="#dc3545" stroke-width="1.8"><path d="M.8 .8L9.200 9.200M9.200 .8L.8 9.200"/></svg>
<div class="abs" style="left:8.2px;top:302.0px;width:13px;height:13px;border:1.4px solid #7074ee;border-radius:3.5px;background:#fff"></div>
<div class="t" style="left:68.3px;top:303.5px;color:#222">testowy typ zasobów</div>
<svg class="abs" style="left:472.1px;top:307.3px" width="10" height="10" viewBox="0 0 10 10" fill="none" stroke="#dc3545" stroke-width="1.8"><path d="M.8 .8L9.200 9.200M9.200 .8L.8 9.200"/></svg>
<svg class="abs" style="left:637.1px;top:307.3px" width="10" height="10" viewBox="0 0 10 10" fill="none" stroke="#dc3545" stroke-width="1.8"><path d="M.8 .8L9.200 9.200M9.200 .8L.8 9.200"/></svg>
<svg class="abs" style="left:809.8px;top:307.3px" width="10" height="10" viewBox="0 0 10 10" fill="none" stroke="#dc3545" stroke-width="1.8"><path d="M.8 .8L9.200 9.200M9.200 .8L.8 9.200"/></svg>
<svg class="abs" style="left:972.2px;top:306.7px" width="14" height="11" viewBox="0 0 14 11" fill="none" stroke="#198754" stroke-width="1.7"><path d="M.8 5.900L4.800 9.600L13.300 .8"/></svg>
<svg class="abs" style="left:1138.4px;top:307.3px" width="10" height="10" viewBox="0 0 10 10" fill="none" stroke="#dc3545" stroke-width="1.8"><path d="M.8 .8L9.200 9.200M9.200 .8L.8 9.200"/></svg>
<div class="abs" style="left:8.2px;top:333.0px;width:13px;height:13px;border:1.4px solid #7074ee;border-radius:3.5px;background:#fff"></div>
<div class="t" style="left:68.3px;top:334.5px;color:#222">Samochód client client template</div>
<svg class="abs" style="left:472.1px;top:338.3px" width="10" height="10" viewBox="0 0 10 10" fill="none" stroke="#dc3545" stroke-width="1.8"><path d="M.8 .8L9.200 9.200M9.200 .8L.8 9.200"/></svg>
<svg class="abs" style="left:635.1px;top:337.7px" width="14" height="11" viewBox="0 0 14 11" fill="none" stroke="#198754" stroke-width="1.7"><path d="M.8 5.900L4.800 9.600L13.300 .8"/></svg>
<svg class="abs" style="left:807.8px;top:337.7px" width="14" height="11" viewBox="0 0 14 11" fill="none" stroke="#198754" stroke-width="1.7"><path d="M.8 5.900L4.800 9.600L13.300 .8"/></svg>
<svg class="abs" style="left:974.2px;top:338.3px" width="10" height="10" viewBox="0 0 10 10" fill="none" stroke="#dc3545" stroke-width="1.8"><path d="M.8 .8L9.200 9.200M9.200 .8L.8 9.200"/></svg>
<svg class="abs" style="left:1138.4px;top:338.3px" width="10" height="10" viewBox="0 0 10 10" fill="none" stroke="#dc3545" stroke-width="1.8"><path d="M.8 .8L9.200 9.200M9.200 .8L.8 9.200"/></svg>
<div class="abs" style="left:8.2px;top:364.0px;width:13px;height:13px;border:1.4px solid #7074ee;border-radius:3.5px;background:#fff"></div>
<div class="t" style="left:68.3px;top:365.5px;color:#222">testowe zestawienie zasobów</div>
<svg class="abs" style="left:470.1px;top:368.7px" width="14" height="11" viewBox="0 0 14 11" fill="none" stroke="#198754" stroke-width="1.7"><path d="M.8 5.900L4.800 9.600L13.300 .8"/></svg>
<svg class="abs" style="left:637.1px;top:369.3px" width="10" height="10" viewBox="0 0 10 10" fill="none" stroke="#dc3545" stroke-width="1.8"><path d="M.8 .8L9.200 9.200M9.200 .8L.8 9.200"/></svg>
<svg class="abs" style="left:809.8px;top:369.3px" width="10" height="10" viewBox="0 0 10 10" fill="none" stroke="#dc3545" stroke-width="1.8"><path d="M.8 .8L9.200 9.200M9.200 .8L.8 9.200"/></svg>
<svg class="abs" style="left:972.2px;top:368.7px" width="14" height="11" viewBox="0 0 14 11" fill="none" stroke="#198754" stroke-width="1.7"><path d="M.8 5.900L4.800 9.600L13.300 .8"/></svg>
<svg class="abs" style="left:1136.4px;top:368.7px" width="14" height="11" viewBox="0 0 14 11" fill="none" stroke="#198754" stroke-width="1.7"><path d="M.8 5.900L4.800 9.600L13.300 .8"/></svg>
<div class="abs" style="left:8.2px;top:395.0px;width:13px;height:13px;border:1.4px solid #7074ee;border-radius:3.5px;background:#fff"></div>
<div class="t" style="left:68.3px;top:396.5px;color:#222">testowy typ CI client client template</div>
<svg class="abs" style="left:472.1px;top:400.3px" width="10" height="10" viewBox="0 0 10 10" fill="none" stroke="#dc3545" stroke-width="1.8"><path d="M.8 .8L9.200 9.200M9.200 .8L.8 9.200"/></svg>
<svg class="abs" style="left:635.1px;top:399.7px" width="14" height="11" viewBox="0 0 14 11" fill="none" stroke="#198754" stroke-width="1.7"><path d="M.8 5.900L4.800 9.600L13.300 .8"/></svg>
<svg class="abs" style="left:807.8px;top:399.7px" width="14" height="11" viewBox="0 0 14 11" fill="none" stroke="#198754" stroke-width="1.7"><path d="M.8 5.900L4.800 9.600L13.300 .8"/></svg>
<svg class="abs" style="left:974.2px;top:400.3px" width="10" height="10" viewBox="0 0 10 10" fill="none" stroke="#dc3545" stroke-width="1.8"><path d="M.8 .8L9.200 9.200M9.200 .8L.8 9.200"/></svg>
<svg class="abs" style="left:1138.4px;top:400.3px" width="10" height="10" viewBox="0 0 10 10" fill="none" stroke="#dc3545" stroke-width="1.8"><path d="M.8 .8L9.200 9.200M9.200 .8L.8 9.200"/></svg>
<svg class="abs" style="left:1429px;top:296px" width="104" height="30" viewBox="1750 522 104 30">
<polygon points="1754.2,537 1761.6,524.1 1776.5,524.1 1784.0,537 1776.5,549.9 1761.6,549.9" fill="#e1e5fb"/>
<polygon points="1786.8,537 1794.2,524.1 1809.2,524.1 1816.6,537 1809.2,549.9 1794.2,549.9" fill="#e1e5fb"/>
<polygon points="1819.4,537 1826.8,524.1 1841.8,524.1 1849.2,537 1841.8,549.9 1826.8,549.9" fill="#e1e5fb"/>
<path d="M1762 537.300C1763.800 533.600 1766.200 531.700 1769.200 531.700S1774.600 533.600 1776.400 537.300C1774.600 541 1772.200 542.900 1769.200 542.900S1763.800 541 1762 537.300Z" fill="#9093e6"/><circle cx="1769.200" cy="537.300" r="3.800" fill="#e1e5fb"/><circle cx="1769.200" cy="537.300" r="2.700" fill="#2d31d0"/><circle cx="1768.200" cy="536.300" r="1" fill="#e1e5fb"/>
<g fill="none" stroke="#2d31d0" stroke-width="1.1"><path d="M1801.500 532.700H1797.600a1.200 1.200 0 0 0 -1.200 1.200V541.800a1.200 1.200 0 0 0 1.200 1.200H1805.500a1.200 1.200 0 0 0 1.200 -1.200V538"/><path d="M1805.600 531.700L1807.700 533.800L1802 539.500L1799.500 540L1800 537.400Z" stroke-linejoin="round"/></g>
<g fill="none" stroke="#2d31d0" stroke-width="1"><path d="M1829 533.300H1840.400M1832.400 533.300V531.400H1837V533.300M1830 533.300L1830.500 542.400a.8 .8 0 0 0 .8 .8H1838.100a.8 .8 0 0 0 .8 -.8L1839.400 533.300M1832.400 535.300V541.300M1834.700 535.300V541.300M1837 535.300V541.300"/></g>
</svg>
<div class="abs" style="left:0.0px;top:419.0px;width:1578px;height:2px;background:#e4e5ea"></div>
<div class="abs" style="left:0.0px;top:421.0px;width:1578px;height:44px;background:#f9f9fc;border-radius:0 0 5px 5px"></div>
<svg class="abs" style="left:16.6px;top:438px" width="9" height="9.400" viewBox="0 0 9 9.4" fill="#222"><rect x="0" y="0" width="1.800" height="9.400"/><path d="M9 0V9.400L2 4.700Z"/></svg>
<svg class="abs" style="left:49.3px;top:438px" width="7" height="9.400" viewBox="0 0 7 9.4" fill="#222"><path d="M7 0V9.400L0 4.700Z"/></svg>
<div class="t" style="left:68px;top:435.5px;width:31px;text-align:center;font-family:&quot;Liberation Serif&quot;,serif;font-size:14px;letter-spacing:0;-webkit-text-stroke:0;color:#2d31d0">1</div>
<div class="abs" style="left:99.0px;top:428.0px;width:32px;height:31px;background:#cdd0f0"></div>
<div class="t" style="left:99px;top:435.5px;width:32px;text-align:center;font-family:&quot;Liberation Serif&quot;,serif;font-size:14px;letter-spacing:0;-webkit-text-stroke:0;color:#2d31d0">2</div>
<svg class="abs" style="left:142.6px;top:438px" width="7" height="9.400" viewBox="0 0 7 9.4" fill="#666"><path d="M0 0V9.400L7 4.700Z"/></svg>
<svg class="abs" style="left:172.4px;top:438px" width="8.400" height="9.400" viewBox="0 0 8.4 9.4" fill="#777"><rect x="6.800" y="0" width="1.600" height="9.400"/><path d="M0 0V9.400L6.600 4.700Z"/></svg>
<div class="t" style="left:205.2px;top:435.5px;">Strona</div>
<div class="abs" style="left:251.0px;top:428.0px;width:65px;height:31px;background:#f8f9fe;border:1px solid #e6e8f8;border-radius:4px"></div>
<div class="t" style="left:262.0px;top:435.5px;">2</div>
<div class="t" style="left:322.6px;top:435.5px;">z 2</div>
<div class="abs" style="left:352.0px;top:428.0px;width:65px;height:31px;background:#f8f9fe;border:1px solid #e6e8f8;border-radius:4px"></div>
<div class="abs" style="left:388.8px;top:428.0px;width:28.2px;height:31px;background:#e6e9fb;border-radius:0 4px 4px 0"></div>
<div class="t" style="left:363.4px;top:435.5px;">20</div>
<svg class="abs" style="left:398.8px;top:440px" width="8.200" height="5.800" viewBox="0 0 8.2 5.8" fill="#2d31d0"><path d="M0 0H8.200L4.100 5.800Z"/></svg>
<div class="t" style="left:424.2px;top:435.5px;">na stronę</div>
<div class="t" style="right:47.7px;top:435.5px;letter-spacing:0.05px">Wyświetlanie elementów 21 - 31 z 31</div>
<svg class="abs" style="left:1549.5px;top:434.20000000000005px" width="16" height="17" viewBox="0 0 16 17" fill="none" stroke="#222" stroke-width="1.7"><path d="M10.400 3.400A6.300 6.300 0 1 0 14.300 9.300"/><path d="M8 .2L11.800 3.500L8 6.800Z" fill="#222" stroke="none"/></svg>
</div>
</body>
</html>
